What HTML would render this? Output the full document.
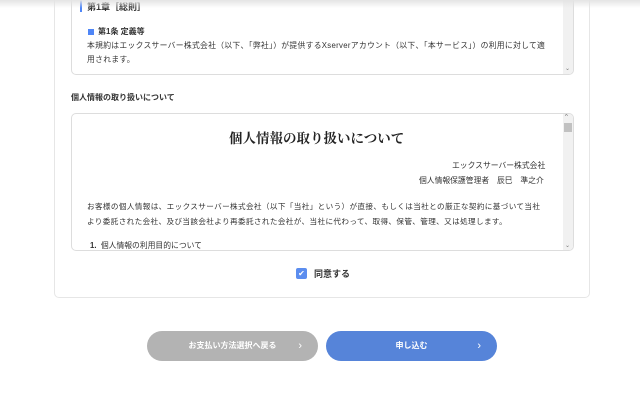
<!DOCTYPE html>
<html><head><meta charset="utf-8"><style>
*{margin:0;padding:0;box-sizing:border-box}
body{width:640px;height:404px;background:#fff;position:relative;overflow:hidden;font-family:"Liberation Sans","Noto Sans CJK JP",sans-serif;color:#333;font-size:8px}
.shadow{position:absolute;left:0;top:0;width:640px;height:8px;background:linear-gradient(#e4e4e4,rgba(255,255,255,0));z-index:5}
.card{position:absolute;left:54px;top:-20px;width:536px;height:318px;border:1px solid #e6e6e6;border-radius:5px}
.box{position:absolute;left:71px;width:503px;border:1px solid #ddd;border-radius:5px;overflow:hidden;background:#fff}
.sb{position:absolute;right:0;top:0;bottom:0;width:10px;background:#f1f1f1}
.t{position:absolute;white-space:nowrap}
.btn{position:absolute;top:331px;height:30px;border-radius:15px;color:#fff;font-size:8px;font-weight:bold;text-align:center;line-height:30px}
.btn span{position:absolute;right:16px;top:0;font-size:11px;font-weight:normal}
</style></head><body>
<div class="shadow"></div>
<div class="card"></div>
<div class="box" style="top:-10px;height:85px">
  <div class="sb"><div style="position:absolute;bottom:2px;left:2px;font-size:6px;color:#777">⌄</div></div>
</div>
<div style="position:absolute;left:80px;top:0;width:2px;height:12px;background:#4f86f7"></div>
<div class="t" style="left:87px;top:0;font-weight:bold;font-size:9px">第1章［総則］</div>
<div style="position:absolute;left:88px;top:29px;width:6px;height:6px;background:#4f86f7"></div>
<div class="t" style="left:98px;top:26px;font-weight:bold">第1条 定義等</div>
<div class="t" style="left:87px;top:40px;font-size:7.8px;letter-spacing:0.3px">本規約はエックスサーバー株式会社（以下、「弊社」）が提供するXserverアカウント（以下、「本サービス」）の利用に対して適</div>
<div class="t" style="left:87px;top:54px;font-size:7.8px;letter-spacing:0.3px">用されます。</div>
<div class="t" style="left:71px;top:92px;font-weight:bold;font-size:8px">個人情報の取り扱いについて</div>
<div class="box" style="top:113px;height:138px">
  <div class="sb"><div style="position:absolute;top:9px;left:1px;width:8px;height:9px;background:#c1c1c1"></div><div style="position:absolute;top:0;left:2px;font-size:6px;color:#666">^</div><div style="position:absolute;bottom:1px;left:2px;font-size:6px;color:#777">⌄</div></div>
</div>
<div class="t" style="left:229px;top:127px;font-size:13.5px;font-weight:bold;letter-spacing:0px;font-family:'Noto Serif CJK SC','Noto Sans CJK JP',serif;color:#222">個人情報の取り扱いについて</div>
<div class="t" style="left:452px;top:160px;font-size:7.8px">エックスサーバー株式会社</div>
<div class="t" style="left:419px;top:175px;font-size:7.8px">個人情報保護管理者　辰巳　準之介</div>
<div class="t" style="left:87px;top:201px;font-size:7.6px;letter-spacing:0.37px">お客様の個人情報は、エックスサーバー株式会社（以下「当社」という）が直接、もしくは当社との厳正な契約に基づいて当社</div>
<div class="t" style="left:87px;top:216px;font-size:7.6px;letter-spacing:0.37px">より委託された会社、及び当該会社より再委託された会社が、当社に代わって、取得、保管、管理、又は処理します。</div>
<div class="t" style="left:90px;top:240px;font-size:7.8px"><b>1.</b>&nbsp; 個人情報の利用目的について</div>
<div style="position:absolute;left:296px;top:268px;width:11px;height:11px;border-radius:2px;background:#5b8def;color:#fff;font-size:8px;line-height:11px;text-align:center">✔</div>
<div class="t" style="left:314px;top:267px;font-weight:bold;font-size:9px">同意する</div>
<div class="btn" style="left:147px;width:171px;background:#b3b3b3">お支払い方法選択へ戻る<span>›</span></div>
<div class="btn" style="left:326px;width:171px;background:#5684d9">申し込む<span>›</span></div>
</body></html>
